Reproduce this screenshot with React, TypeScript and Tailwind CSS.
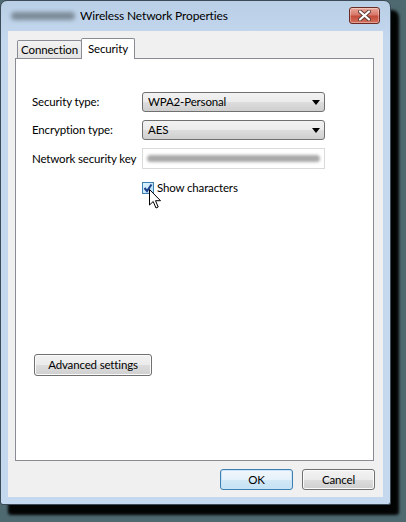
import React from 'react';

const font = "font-['Lato','Noto_Sans',sans-serif]";
const txt = 'text-[11.5px] tracking-[-0.15px] leading-none text-black';

function Select({ value }: { value: string }) {
  return (
    <div className="flex h-[20px] w-[183px] items-center justify-between rounded-[3px] border border-[#707070] bg-[linear-gradient(#f2f2f2,#ebebeb_50%,#dddddd_50%,#cfcfcf)] pl-[5px] pr-[4px]">
      <span className={txt}>{value}</span>
      <svg width="8" height="5" viewBox="0 0 8 5">
        <path d="M0 0H8L4 5Z" fill="#000" />
      </svg>
    </div>
  );
}

function Button({ label, primary = false, className = '' }: { label: string; primary?: boolean; className?: string }) {
  return (
    <div
      className={`flex items-center justify-center rounded-[3px] border ${txt} ${
        primary
          ? 'border-[#3c7fb1] bg-[linear-gradient(#f2f7fb,#e5f1fa_50%,#d3e9f7_50%,#c4e1f4)] shadow-[inset_0_0_0_1px_#c9e4f7]'
          : 'border-[#707070] bg-[linear-gradient(#f2f2f2,#ebebeb_50%,#dddddd_50%,#cfcfcf)] shadow-[inset_0_0_0_1px_#fbfbfb]'
      } ${className}`}
    >
      {label}
    </div>
  );
}

function Row({ label, children }: { label: string; children: React.ReactNode }) {
  return (
    <div className="flex items-center">
      <span className={`w-[110px] whitespace-nowrap ${txt}`}>{label}</span>
      {children}
    </div>
  );
}

export default function App() {
  return (
    <div className={`relative h-[522px] w-[406px] overflow-hidden bg-[#4e6a70] ${font}`}>
      {/* Window */}
      <div className="flex h-[505px] w-[391px] flex-col rounded-t-[7px] rounded-b-[3px] border border-[#3c4b57] bg-[linear-gradient(#b9cfe6,#c4d8ee_40px)] shadow-[8px_10px_3px_rgba(0,0,0,0.97)]">
        {/* Title bar */}
        <div className="flex h-[30px] shrink-0 items-center pl-[10px] pr-[10px]">
          <div className="h-[8px] w-[64px] rounded-full bg-[#75838f] opacity-90 blur-[2px]" />
          <span className={`ml-[5px] whitespace-nowrap ${txt} text-[12px]`}>Wireless Network Properties</span>
          <div className="ml-auto mt-[-2px] flex h-[17px] w-[31px] items-center justify-center rounded-[3px] border border-[#6b2b24] bg-[linear-gradient(#e9a99b,#d7786a_45%,#c44c3a_55%,#d2705c)] shadow-[inset_0_0_0_1px_rgba(255,255,255,0.35)]">
            <svg width="13" height="11" viewBox="0 0 13 11">
              <path d="M2 1.5L11 9.5M11 1.5L2 9.5" stroke="#5a3b36" strokeWidth="4" strokeLinecap="round" />
              <path d="M2 1.5L11 9.5M11 1.5L2 9.5" stroke="#fff" strokeWidth="2.2" strokeLinecap="round" />
            </svg>
          </div>
        </div>

        {/* Client area */}
        <div className="mx-[7px] flex h-[466px] flex-col bg-[#f0f0f0]">
          {/* Tabs */}
          <div className="ml-[9px] mt-[7px] flex items-end">
            <div className={`flex h-[18px] w-[65px] items-center justify-center rounded-t-[2px] border border-b-0 border-[#898c95] bg-[linear-gradient(#f2f2f2,#e3e3e3)] ${txt}`}>
              Connection
            </div>
            <div className={`relative z-10 mb-[-1px] ml-[-1px] flex h-[21px] w-[54px] items-start justify-center rounded-t-[2px] border border-b-0 border-[#898c95] bg-white pt-[4px] ${txt}`}>
              Security
            </div>
          </div>

          {/* Tab panel */}
          <div className="ml-[7px] flex h-[403px] w-[359px] flex-col border border-[#898c95] bg-white pl-[16px]">
            <div className="mt-[33px] flex flex-col gap-[8px]">
              <Row label="Security type:">
                <Select value="WPA2-Personal" />
              </Row>
              <Row label="Encryption type:">
                <Select value="AES" />
              </Row>
              <Row label="Network security key">
                <div className="flex h-[21px] w-[183px] items-center border border-[#dadada] px-[4px]">
                  <div className="h-[7px] w-full rounded-full bg-[#a9a9a9] blur-[1.5px]" />
                </div>
              </Row>
            </div>

            <div className="relative ml-[110px] mt-[13px] flex items-center">
              <div className="flex h-[12px] w-[12px] items-center justify-center border border-[#3c7fb1] bg-[linear-gradient(135deg,#dff3fd,#b3dff8)]">
                <svg width="10" height="10" viewBox="0 0 10 10">
                  <path d="M1.5 5L4 8L8.5 1.5" fill="none" stroke="#1e3f8c" strokeWidth="2" />
                </svg>
              </div>
              <span className={`ml-[3px] ${txt}`}>Show characters</span>
              {/* Mouse cursor */}
              <svg className="absolute left-[7px] top-[7px]" width="13" height="20" viewBox="0 0 13 20">
                <path d="M0.5 0.5V16L4.2 12.5L7 19L9.2 18L6.5 11.7H11.5Z" fill="#fff" stroke="#000" strokeWidth="1" strokeLinejoin="round" />
              </svg>
            </div>

            <Button label="Advanced settings" className="ml-[2px] mt-[160px] h-[22px] w-[118px]" />
          </div>

          {/* Dialog buttons */}
          <div className="mt-[8px] flex justify-end gap-[9px] pr-[8px]">
            <Button label="OK" primary className="h-[21px] w-[73px]" />
            <Button label="Cancel" className="h-[21px] w-[73px]" />
          </div>
        </div>
      </div>
    </div>
  );
}
